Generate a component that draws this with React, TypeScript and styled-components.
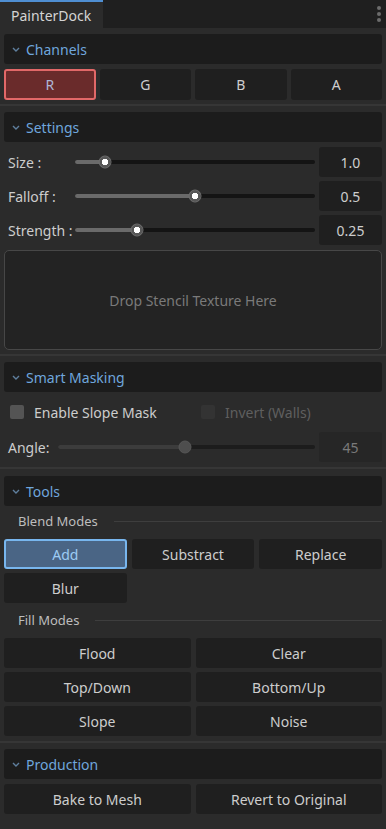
import React from "react";
import styled, { createGlobalStyle, css } from "styled-components";

const GlobalStyle = createGlobalStyle`
  html, body {
    margin: 0;
    padding: 0;
    background: #2b2b2b;
  }
  body {
    font-family: "Noto Sans", "Open Sans", sans-serif;
    font-size: 14px;
    color: #cdcdcd;
  }
`;

const Dock = styled.div`
  width: 386px;
  min-height: 829px;
  background: #2b2b2b;
`;

const TabBar = styled.div`
  height: 28px;
  display: flex;
  align-items: stretch;
  background: #1f1f1f;
`;

const Tab = styled.div`
  width: 103px;
  box-sizing: border-box;
  padding-left: 11px;
  display: flex;
  align-items: center;
  background: #2b2b2b;
  border-top: 2px solid #4f8fd3;
  color: #d4d4d4;
`;

const MenuDots = styled.div`
  margin-left: auto;
  margin-right: 5px;
  display: flex;
  flex-direction: column;
  justify-content: center;
  gap: 2px;

  span {
    width: 4px;
    height: 4px;
    border-radius: 50%;
    background: #6c6c6c;
  }
`;

const Panel = styled.div`
  padding: 6px 4px 0;
  display: flex;
  flex-direction: column;
`;

const Section = styled.div`
  display: flex;
  flex-direction: column;
  gap: 4px;
`;

const Header = styled.div`
  height: 30px;
  margin-bottom: 1px;
  display: flex;
  align-items: center;
  gap: 6px;
  padding-left: 8px;
  border-radius: 3px;
  background: #1c1c1c;
  color: #6fa6dc;
  font-size: 14px;
`;

const Separator = styled.div<{ $top: number; $bottom: number }>`
  height: 2px;
  margin: ${({ $top, $bottom }) => `${$top}px -4px ${$bottom}px`};
  background: #363636;
`;

const Grid = styled.div<{ $cols: number; $gap?: number }>`
  display: grid;
  grid-template-columns: repeat(${({ $cols }) => $cols}, 1fr);
  gap: 4px ${({ $gap }) => $gap ?? 5}px;
`;

type Tone = "plain" | "red" | "blue";

const Button = styled.div<{ $tone?: Tone; $tall?: boolean }>`
  height: ${({ $tall }) => ($tall ? 31 : 30)}px;
  box-sizing: border-box;
  display: flex;
  align-items: center;
  justify-content: center;
  border-radius: 3px;
  background: #1f1f1f;
  color: #cdcdcd;
  ${({ $tone }) =>
    $tone === "red" &&
    css`
      background: #6a2b2b;
      border: 2px solid #e26868;
      color: #aeb6d6;
    `}
  ${({ $tone }) =>
    $tone === "blue" &&
    css`
      background: #4a6585;
      border: 2px solid #78b6ee;
      color: #9ccbf4;
    `}
`;

const SliderRow = styled.div`
  height: 30px;
  display: flex;
  align-items: center;
`;

const RowLabel = styled.div<{ $width: number }>`
  width: ${({ $width }) => $width}px;
  flex-shrink: 0;
  padding-left: 4px;
  box-sizing: border-box;
  color: #cdcdcd;
`;

const Track = styled.div<{ $disabled?: boolean }>`
  flex: 1;
  height: 4px;
  margin-right: 4px;
  position: relative;
  border-radius: 2px;
  background: ${({ $disabled }) => ($disabled ? "#1c1c1c" : "#141414")};
`;

const Fill = styled.div<{ $disabled?: boolean }>`
  height: 100%;
  border-radius: 2px;
  background: ${({ $disabled }) => ($disabled ? "#3c3c3c" : "#6a6a6a")};
`;

const Knob = styled.div<{ $disabled?: boolean }>`
  position: absolute;
  top: 50%;
  width: 13px;
  height: 13px;
  box-sizing: border-box;
  border-radius: 50%;
  transform: translate(-50%, -50%);
  ${({ $disabled }) =>
    $disabled
      ? css`
          background: #4e4e4e;
          border: 1px solid #575757;
        `
      : css`
          background: radial-gradient(circle, #ffffff 0 3px, #575757 3.5px);
          border: 1px solid #707070;
        `}
`;

const ValueBox = styled.div<{ $disabled?: boolean }>`
  width: 63px;
  height: 30px;
  flex-shrink: 0;
  display: flex;
  align-items: center;
  justify-content: center;
  border-radius: 3px;
  background: ${({ $disabled }) => ($disabled ? "#262626" : "#1f1f1f")};
  color: ${({ $disabled }) => ($disabled ? "#7a7a7a" : "#cdcdcd")};
`;

const DropZone = styled.div`
  height: 100px;
  margin-top: 1px;
  box-sizing: border-box;
  display: flex;
  align-items: center;
  justify-content: center;
  border: 1px solid #474747;
  border-radius: 5px;
  background: #232323;
  color: #7a7a7a;
`;

const CheckRow = styled.div`
  height: 30px;
  margin-bottom: 1px;
  display: grid;
  grid-template-columns: 1fr 1fr;
  gap: 4px;
`;

const CheckItem = styled.label<{ $disabled?: boolean }>`
  display: flex;
  align-items: center;
  gap: 10px;
  padding-left: 6px;
  color: ${({ $disabled }) => ($disabled ? "#5f5f5f" : "#cdcdcd")};
`;

const Box = styled.span<{ $disabled?: boolean }>`
  width: 14px;
  height: 14px;
  border-radius: 2px;
  background: ${({ $disabled }) => ($disabled ? "#333333" : "#545454")};
`;

const GroupLabel = styled.div<{ $top: number; $bottom: number }>`
  height: 20px;
  margin: ${({ $top, $bottom }) => `${$top}px 0 ${$bottom}px`};
  display: flex;
  align-items: center;
  gap: 16px;
  padding-left: 14px;
  font-size: 13px;
  color: #bdbdbd;

  &::after {
    content: "";
    flex: 1;
    height: 1px;
    background: #3e3e3e;
  }
`;

const Chevron = () => (
  <svg width="8" height="5" viewBox="0 0 8 5">
    <polyline points="1,1 4,4 7,1" fill="none" stroke="#5f7f9e" strokeWidth="1.4" />
  </svg>
);

const SectionHeader = ({ title }: { title: string }) => (
  <Header>
    <Chevron />
    {title}
  </Header>
);

const Slider = ({
  label,
  labelWidth,
  value,
  display,
  disabled,
}: {
  label: string;
  labelWidth: number;
  value: number;
  display: string;
  disabled?: boolean;
}) => (
  <SliderRow>
    <RowLabel $width={labelWidth}>{label}</RowLabel>
    <Track $disabled={disabled}>
      <Fill $disabled={disabled} style={{ width: `${value * 100}%` }} />
      <Knob $disabled={disabled} style={{ left: `${value * 100}%` }} />
    </Track>
    <ValueBox $disabled={disabled}>{display}</ValueBox>
  </SliderRow>
);

export default function App() {
  return (
    <Dock>
      <GlobalStyle />
      <TabBar>
        <Tab>PainterDock</Tab>
        <MenuDots>
          <span />
          <span />
          <span />
        </MenuDots>
      </TabBar>

      <Panel>
        <Section>
          <SectionHeader title="Channels" />
          <Grid $cols={4} $gap={4}>
            <Button $tall $tone="red">R</Button>
            <Button $tall>G</Button>
            <Button $tall>B</Button>
            <Button $tall>A</Button>
          </Grid>
        </Section>
        <Separator $top={4} $bottom={6} />

        <Section>
          <SectionHeader title="Settings" />
          <Slider label="Size :" labelWidth={71} value={0.125} display="1.0" />
          <Slider label="Falloff :" labelWidth={71} value={0.5} display="0.5" />
          <Slider label="Strength :" labelWidth={71} value={0.258} display="0.25" />
          <DropZone>Drop Stencil Texture Here</DropZone>
        </Section>
        <Separator $top={4} $bottom={6} />

        <Section>
          <SectionHeader title="Smart Masking" />
          <CheckRow>
            <CheckItem>
              <Box />
              Enable Slope Mask
            </CheckItem>
            <CheckItem $disabled>
              <Box $disabled />
              Invert (Walls)
            </CheckItem>
          </CheckRow>
          <Slider label="Angle:" labelWidth={54} value={0.495} display="45" disabled />
        </Section>
        <Separator $top={5} $bottom={7} />

        <Section>
          <SectionHeader title="Tools" />
        </Section>
        <GroupLabel $top={4} $bottom={8}>Blend Modes</GroupLabel>
        <Grid $cols={3}>
          <Button $tone="blue">Add</Button>
          <Button>Substract</Button>
          <Button>Replace</Button>
          <Button>Blur</Button>
        </Grid>
        <GroupLabel $top={7} $bottom={8}>Fill Modes</GroupLabel>
        <Grid $cols={2}>
          <Button>Flood</Button>
          <Button>Clear</Button>
          <Button>Top/Down</Button>
          <Button>Bottom/Up</Button>
          <Button>Slope</Button>
          <Button>Noise</Button>
        </Grid>
        <Separator $top={5} $bottom={6} />

        <Section>
          <SectionHeader title="Production" />
          <Grid $cols={2}>
            <Button>Bake to Mesh</Button>
            <Button>Revert to Original</Button>
          </Grid>
        </Section>
      </Panel>
    </Dock>
  );
}
